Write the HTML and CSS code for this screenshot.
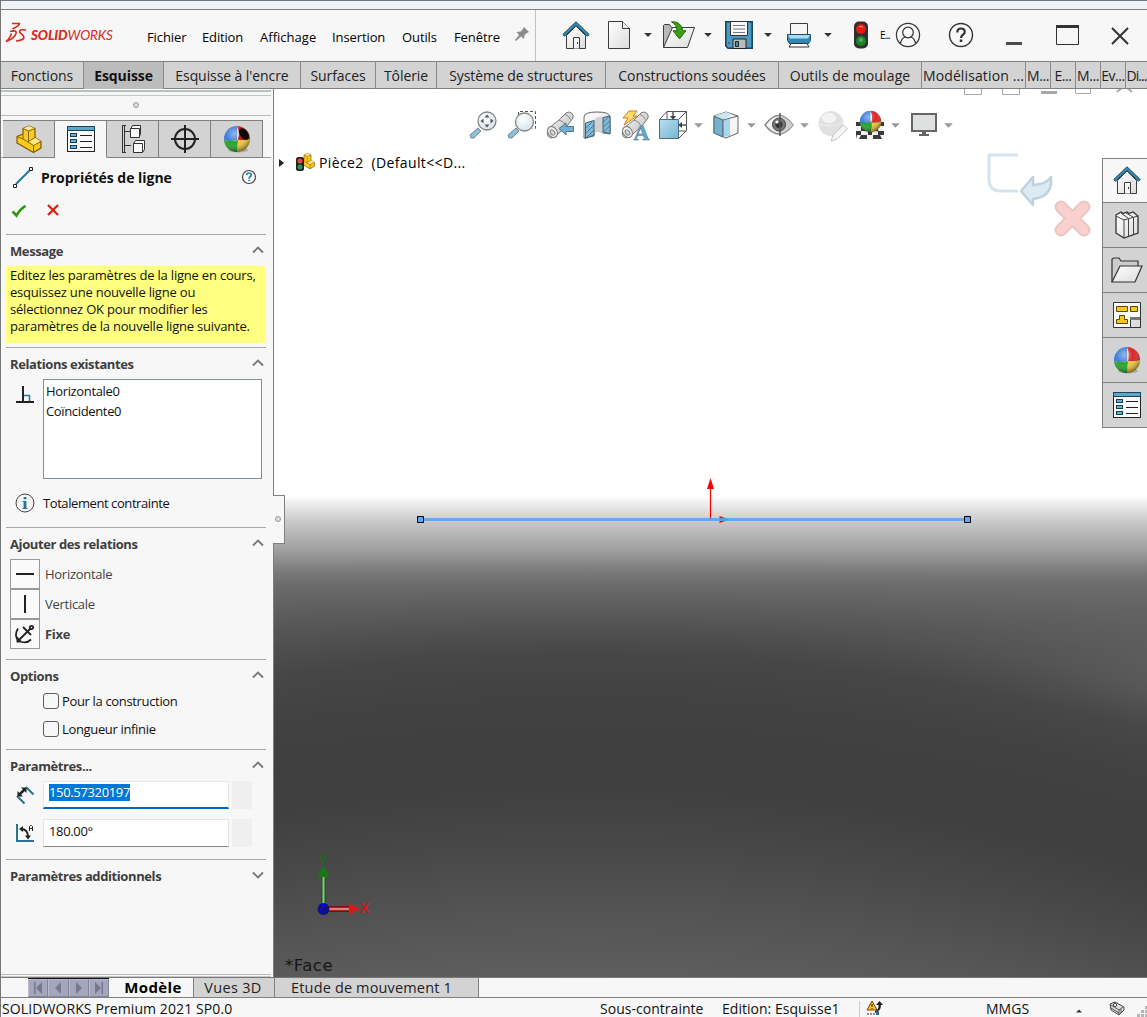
FILE: index.html
```html
<!DOCTYPE html>
<html lang="fr">
<head>
<meta charset="utf-8">
<title>SOLIDWORKS</title>
<link rel="stylesheet" href="styles.css">
</head>
<body>
<svg class="defs" width="0" height="0">
  <defs>
    <linearGradient id="gPaper" x1="0" y1="0" x2="1" y2="1"><stop offset="0" stop-color="#fff"/><stop offset="1" stop-color="#dcdcdc"/></linearGradient>
    <linearGradient id="gIce" x1="0" y1="0" x2="1" y2="1"><stop offset="0" stop-color="#b9def0"/><stop offset="1" stop-color="#78b4d2"/></linearGradient>
    <linearGradient id="gGrey" x1="0" y1="0" x2="1" y2="1"><stop offset="0" stop-color="#fff"/><stop offset="1" stop-color="#b4b4b4"/></linearGradient>
    <radialGradient id="gShade" cx=".4" cy=".3" r=".7"><stop offset="0" stop-color="#fff" stop-opacity=".45"/><stop offset=".5" stop-color="#fff" stop-opacity="0"/><stop offset="1" stop-color="#000" stop-opacity=".45"/></radialGradient>
    <radialGradient id="gLens" cx=".4" cy=".35" r=".7"><stop offset="0" stop-color="#fff"/><stop offset="1" stop-color="#d3e2e8"/></radialGradient>
    <symbol id="home" viewBox="0 0 28 28">
      <path d="M4.500 14.500 14 5l9.500 9.500V27.500h-19z" fill="url(#gPaper)" stroke="#3c3c3c"/>
      <path d="M11.500 27.500v-11h6v11" fill="#f4f4f4" stroke="#3c3c3c"/><path d="M15.500 21v2" stroke="#333"/>
      <path d="M.8 13.500 14 .8l13.200 12.700-1.700 1.700L14 4.600 2.500 15.200z" fill="#3589b2" stroke="#17455f"/>
    </symbol>
    <symbol id="sphere" viewBox="0 0 28 28">
      <ellipse cx="15" cy="25" rx="10" ry="2.500" fill="#000" opacity=".2"/>
      <path d="M14 14V1A13 13 0 0 0 1 15Q7 17 14 15z" fill="#3d7bd9"/>
      <path d="M14 1Q17 8 15 15q8 1 12-1A13 13 0 0 0 14 1z" fill="#d92626"/>
      <path d="M1 15q6 2 14 0-1 8-1 12A13 13 0 0 1 1 15z" fill="#26a526"/>
      <path d="M15 15q8 1 12-1a13 13 0 0 1-13 13q2-6 1-12z" fill="#eec73a"/>
      <circle cx="14" cy="14" r="13" fill="url(#gShade)"/>
    </symbol>
    <symbol id="plist" viewBox="0 0 28 26">
      <rect x=".5" y=".5" width="27" height="25" fill="#fafafa" stroke="#222"/>
      <rect x=".5" y=".5" width="27" height="4" fill="#5ea7c9" stroke="#17455f"/>
      <g fill="#63b0d4" stroke="#153f57"><rect x="3.500" y="7.500" width="6" height="3"/><rect x="3.500" y="13.500" width="6" height="3"/><rect x="3.500" y="19.500" width="6" height="3"/></g>
      <path d="M13 9.500h12M13 15.500h12M13 21.500h12" stroke="#222"/>
    </symbol>
    <symbol id="part" viewBox="0 0 26 28">
      <path d="M7 3.500 13 1l6 2.500v9l6 4v6.500l-7.500 4.500L1 18v-6.500L7 9z" fill="#fbcb22" stroke="#7c5800" stroke-width="1.200" stroke-linejoin="round"/>
      <path d="m7 3.500 5.500 2.500L19 3.500 13 1zM17.500 20.500l7.500-4-6-4-6 4z" fill="#ffe88c"/>
      <path d="m7 3.500 5.500 2.500L19 3.500M12.500 6v10.500l6.500-4M7 9v5l-6-2.500M7 14l10.500 6.500 7.500-4M17.500 20.500v7" fill="none" stroke="#8a6400"/>
    </symbol>
    <symbol id="scope" viewBox="0 0 28 28">
      <path d="M3 17 13 9l7-7q3-2 5.500 0t1.500 5l-6 8-9 8-4 3.500q-4 1.500-6-1.500t1-8z" fill="url(#gGrey)" stroke="#777"/>
      <ellipse cx="6.500" cy="21" rx="4.500" ry="5.800" transform="rotate(-35 6.500 21)" fill="#f2f2f2" stroke="#777"/>
      <ellipse cx="6.500" cy="21.500" rx="2" ry="3" transform="rotate(-35 6.500 21.500)" fill="#d5d5d5" stroke="#888"/><path d="m13 9q5 1 7 6M19 3.500q4 1 5.500 5" fill="none" stroke="#888"/>
    </symbol>
    <symbol id="caret" viewBox="0 0 8 8"><path d="M.2 2h7.600L4 6z" fill="currentColor"/></symbol>
    <symbol id="up" viewBox="0 0 12 8"><path d="M1 6.500 6 1.500l5 5" fill="none" stroke="#777" stroke-width="1.900"/></symbol>
  </defs>
</svg>

<div class="app">
  <div class="strip"></div>

  <header class="head">
    <div class="brand">
      <svg width="21" height="22" viewBox="0 0 21 22" fill="none" stroke="#da291c" stroke-width="1.600"><path d="M6 1.500h7.500q.5 1.500-7 5.500M4 9.500q7-2 6 2-1.500 5-10 8 3-2 5.500-8M20 8q-7-1-6.500 2l4 4q2 4-7.500 5"/></svg>
      <span class="brand-name"><b>SOLID</b>WORKS</span>
    </div>
    <nav class="menu">
      <span class="m1">Fichier</span><span class="m2">Edition</span><span class="m3">Affichage</span><span class="m4">Insertion</span><span class="m5">Outils</span><span class="m6">Fenêtre</span>
    </nav>
    <svg class="pin" width="14" height="14" viewBox="0 0 14 14"><path d="m9 0 5 5-2 1L9.500 8 9 12 6 9.500 1 14l-1-1 4-5L1.500 5l4.300-.5L8 2z" fill="#8c8c8c"/></svg>
    <div class="quick">
      <svg class="q-home" width="28" height="28"><use href="#home"/></svg>
      <svg class="q-new" width="24" height="28" viewBox="0 0 24 28"><path d="M1.500.5h14l7 7v20h-21z" fill="url(#gPaper)" stroke="#3c3c3c"/><path d="M15.500.5v7h7" fill="#eee" stroke="#3c3c3c"/></svg>
      <svg class="caret c1" width="8" height="8"><use href="#caret"/></svg>
      <svg class="q-open" width="34" height="28" viewBox="0 0 34 28"><path d="M1.500 26.500v-22l1-1h5l2 3h18v3" fill="#b9b9b9" stroke="#3c3c3c"/><path d="m1.500 26.500 9-20h22l-7 20z" fill="url(#gPaper)" stroke="#3c3c3c"/><path d="M9.500.8q9-1 11.500 9h3l-6.500 8-6.500-8h4Q15 4 9.500.8z" fill="#3aa012" stroke="#226b06"/></svg>
      <svg class="caret c2" width="8" height="8"><use href="#caret"/></svg>
      <svg class="q-save" width="28" height="28" viewBox="0 0 28 28"><path d="M.8.8h26.400v26.400H3L.8 25z" fill="#4d9bc1" stroke="#163f58" stroke-width="1.500"/><path d="M5.500.5h17v14h-17z" fill="#fafafa" stroke="#333"/><path d="M8 4.500h12M8 8h12M8 11.500h12" stroke="#777"/><path d="M8 18h13v9.500H8z" fill="#bbb" stroke="#222"/><path d="M10.500 20.500h3v5h-3z" fill="#4d8eb0" stroke="#222"/><path d="M3 22h2" stroke="#163f58"/></svg>
      <svg class="caret c3" width="8" height="8"><use href="#caret"/></svg>
      <svg class="q-print" width="26" height="26" viewBox="0 0 26 26"><path d="M4.500 1.500h17v13h-17z" fill="#f6f6f6" stroke="#3c3c3c"/><path d="M1.500 12.500h23v6l-2 3h-19l-2-3z" fill="#2f89b4" stroke="#164f6f"/><path d="M2 13h22l-2 3.500H4z" fill="#a9dcef"/><path d="M5 21.500h16l2 3.500H3z" fill="#fff" stroke="#333"/></svg>
      <svg class="caret c4" width="8" height="8"><use href="#caret"/></svg>
      <svg class="q-light" width="16" height="28" viewBox="0 0 16 28"><rect x="1" y=".5" width="14" height="27" rx="5" fill="#303030"/><circle cx="8" cy="8" r="5" fill="#e31b10"/><circle cx="8" cy="20" r="5" fill="#188526"/><path d="M6 6q2-1 4 0" stroke="#ff9d94" fill="none"/><circle cx="8" cy="19" r="2" fill="#62ac61"/></svg>
      <span class="q-more">E...</span>
      <svg class="q-user" width="26" height="26" viewBox="0 0 26 26" fill="none" stroke="#333" stroke-width="1.200"><circle cx="13" cy="13" r="11.600"/><circle cx="13" cy="10.500" r="5.300"/><path d="M5.500 21.500q1-6 5-6.500M20.500 21.500q-1-6-5-6.500"/></svg>
      <svg class="q-help" width="26" height="26" viewBox="0 0 26 26" fill="none" stroke="#333"><circle cx="13" cy="13" r="11.500" stroke-width="1.400"/><path d="M9.300 10.500q0-4 3.700-4t3.800 3.200q0 2-2.200 3.300-1.500 1-1.500 3" stroke-width="2.200"/><path d="M13 17.500v2.500" stroke-width="2.500"/></svg>
      <svg class="q-min" width="16" height="28" viewBox="0 0 16 28"><path d="M0 20h16v3H0z" fill="#4b4b4b"/></svg>
      <svg class="q-max" width="24" height="22" viewBox="0 0 24 22"><path d="M.5 1.500h22v18H.5z" fill="none" stroke="#333"/><path d="M0 0h23v3H0z" fill="#333"/></svg>
      <svg class="q-close" width="18" height="18" viewBox="0 0 18 18"><path d="m1 1 16 16M17 1 1 17" stroke="#333" stroke-width="2"/></svg>
    </div>
  </header>

  <nav class="ribbon">
    <span>Fonctions</span><span class="on">Esquisse</span><span>Esquisse à l'encre</span><span>Surfaces</span><span>Tôlerie</span><span>Système de structures</span><span>Constructions soudées</span><span class="wide">Outils de moulage</span><span class="wide">Modélisation ...</span><span class="tiny">M...</span><span class="tiny">E...</span><span class="tiny">M...</span><span class="tiny">Ev...</span><span class="tiny">Di...</span>
  </nav>

  <main class="main">
    <aside class="panel">
      <div class="grip"><i></i></div>
      <div class="ptabs">
        <span><svg width="26" height="28"><use href="#part"/></svg></span>
        <span class="on"><svg width="28" height="26"><use href="#plist"/></svg></span>
        <span><svg width="24" height="28" viewBox="0 0 24 28" fill="#fafafa" stroke="#333"><path d="M3.500 1v26M1 .5h4M1 27.500h4M1.500.5v27M4 6.500h5M4 20.500h6" fill="none"/><path d="M9.500 4.500l2-4h8v9l-2 3h-8zM12.500 18.500l2-3h9v9l-2 3h-9z"/><path d="M9.500 3.500h9v9h-9zM12.500 18.500h9v9h-9z"/></svg></span>
        <span><svg width="28" height="28" viewBox="0 0 28 28" fill="none" stroke="#222" stroke-width="2"><circle cx="14" cy="14" r="10"/><path d="M0 14h28M14 0v28"/></svg></span>
        <span><svg width="28" height="28" viewBox="0 0 28 28"><use href="#sphere"/><path d="M15 2q5 2 11 12-5 2-11 0 3-6 0-12z" fill="#c51d1d"/><ellipse cx="21" cy="9" rx="4" ry="6.500" transform="rotate(-35 21 9)" fill="#080808"/></svg></span>
      </div>
      <div class="ptitle">
        <svg width="21" height="21" viewBox="0 0 21 21"><path d="M3 17 17 3" stroke="#26739a" stroke-width="2"/><path d="M.5 17.500h3v3h-3zM16.500.5h3v3h-3z" fill="#fff" stroke="#222"/></svg>
        <b>Propriétés de ligne</b>
        <svg class="phelp" width="16" height="16" viewBox="0 0 16 16"><circle cx="8" cy="8" r="6.500" fill="#fff" stroke="#444" stroke-width="1.200"/><path d="M5.700 6.300q0-2.300 2.300-2.300t2.400 1.800q0 1-1.400 2-1 .7-1 2M8 10.700v1.500" stroke="#2a7faa" stroke-width="1.700" fill="none"/></svg>
      </div>
      <div class="confirm">
        <svg width="16" height="14" viewBox="0 0 16 14"><path d="m1.500 7.500 4 4Q9 5 14.500 1.800" fill="none" stroke="#2d9a0c" stroke-width="2.600"/></svg>
        <svg width="12" height="12" viewBox="0 0 12 12"><path d="m1 1 10 10M11 1 1 11" stroke="#d62410" stroke-width="2.300"/></svg>
      </div>

      <section class="sec s-msg">
        <h2>Message<svg width="12" height="8"><use href="#up"/></svg></h2>
        <p class="note">Editez les paramètres de la ligne en cours,<br>esquissez une nouvelle ligne ou<br>sélectionnez OK pour modifier les<br>paramètres de la nouvelle ligne suivante.</p>
      </section>
      <section class="sec s-rel">
        <h2>Relations existantes<svg width="12" height="8"><use href="#up"/></svg></h2>
        <div class="row">
          <svg class="perp" width="18" height="18" viewBox="0 0 18 18"><path d="M8 9.500h5.500V16" fill="none" stroke="#2b7fa8" stroke-width="1.600"/><path d="M7 0v16" stroke="#222" stroke-width="2"/><path d="M0 16h18" stroke="#222" stroke-width="2"/></svg>
          <div class="list"><span>Horizontale0</span><span>Coïncidente0</span></div>
        </div>
        <div class="row info">
          <svg width="20" height="20" viewBox="0 0 20 20"><circle cx="10" cy="10" r="9" fill="#f4f4f4" stroke="#444"/><path d="M10 8v7.500M10 4v2.300" stroke="#26739a" stroke-width="2.800"/><path d="M7.500 8.500H10M7.500 15.500h5" stroke="#26739a"/></svg>
          <span>Totalement contrainte</span>
        </div>
      </section>
      <section class="sec s-add">
        <h2>Ajouter des relations<svg width="12" height="8"><use href="#up"/></svg></h2>
        <div class="rel"><i><svg width="18" height="18" viewBox="0 0 18 18"><path d="M0 9h18" stroke="#222" stroke-width="2"/></svg></i><span>Horizontale</span></div>
        <div class="rel"><i><svg width="18" height="18" viewBox="0 0 18 18"><path d="M9 0v18" stroke="#222" stroke-width="2"/></svg></i><span>Verticale</span></div>
        <div class="rel"><i><svg width="20" height="20" viewBox="0 0 20 20" fill="none" stroke="#222" stroke-width="1.800"><path d="M3 17 15 5M8 3l8 8M3 4.500Q-1 11 3 16M7 18q5 1.500 9-2.500"/><circle cx="16.500" cy="3.500" r="1.700"/><path d="M1.500 12v6.500H8z" fill="#222" stroke="none"/></svg></i><b>Fixe</b></div>
      </section>
      <section class="sec s-opt">
        <h2>Options<svg width="12" height="8"><use href="#up"/></svg></h2>
        <div class="check"><i></i><span>Pour la construction</span></div>
        <div class="check"><i></i><span>Longueur infinie</span></div>
      </section>
      <section class="sec s-par">
        <h2>Paramètres...<svg width="12" height="8"><use href="#up"/></svg></h2>
        <div class="param focus">
          <svg width="18" height="18" viewBox="0 0 18 18"><path d="m1 10 7.500 7.500M10 1l7.500 7.500" stroke="#26739a" stroke-width="2"/><path d="M3 9 9 3" stroke="#222" stroke-width="2.500"/><path d="M1.500 5v5.500H7zM5 1.500h5.500V7z" fill="#222"/></svg>
          <span class="field"><em>150.57320197</em></span><i></i>
        </div>
        <div class="param">
          <svg width="18" height="18" viewBox="0 0 18 18"><path d="M1 0v17h17" fill="none" stroke="#26739a" stroke-width="2"/><path d="M5 5q7 0 7 8" fill="none" stroke="#222" stroke-width="1.800"/><path d="M3 5l4-3v6zM12 15.500 9 11.500h6z" fill="#222"/><path d="M13.500 7V2.500l1-1h1l1 1V7M13.500 4.500h3" fill="none" stroke="#222"/></svg>
          <span class="field">180.00°</span><i></i>
        </div>
      </section>
      <section class="sec s-more">
        <h2>Paramètres additionnels<svg class="down" width="12" height="8"><use href="#up"/></svg></h2>
      </section>
      <div class="pfoot"></div>
    </aside>

    <div class="view">
      <svg class="docbtns" width="172" height="7" viewBox="0 0 172 7" fill="none" stroke="#a8a8a8"><path d="M.5 0v5.500h17V0M38.500 0v5.500h17V0M111.500 0v4.500h15V0"/><path d="M77 3.500h16" stroke-width="3"/><path d="m153 3 4-3.500M168 3l-4-3.500" stroke-width="2"/></svg>
      <div class="hud">
        <svg viewBox="0 0 28 28"><path d="m0 24 8-7 3 3-7 7H1z" fill="#8ebed3" stroke="#6c8d9b"/><circle cx="17" cy="10" r="9" fill="url(#gLens)" stroke="#858585" stroke-width="1.300"/><path d="m17 3.500 2.500 3h-5zM17 16.500l2.500-3h-5zM10.500 10l3-2.500v5zM23.500 10l-3-2.500v5z" fill="#555"/></svg>
        <svg viewBox="0 0 28 28"><path d="M10.500 4V.5h17v17h-3" fill="none" stroke="#555" stroke-dasharray="3 2"/><path d="m0 24 8-7 3 3-7 7H1z" fill="#8ebed3" stroke="#6c8d9b"/><circle cx="16.500" cy="11" r="9" fill="url(#gLens)" stroke="#858585" stroke-width="1.300"/></svg>
        <svg viewBox="0 0 28 28"><use href="#scope"/><path d="m13 17.500 7-5.500v3.500h7.500v5H20v3.500z" fill="#72afd0" stroke="#417b98"/></svg>
        <svg viewBox="0 0 28 28"><path d="M1 6q0-5 13-5t13 5v17l-7-1q-6-4-9 0v3l-10 2z" fill="url(#gPaper)" stroke="#666"/><path d="M11 10q2-5 9-4v16q-5-3-9 1z" fill="#d2d2d2"/><path d="M2.500 12 11 9.500V24l-8.500 3.500zM20 6.500 27 5v17.500L20 21z" fill="#7fbbda" stroke="#3f6577"/><path d="m3 17 6-6M3 22l8-8M3 27l8-8M20.500 11l5-5M20.500 16l6-6M21 20.500l6-6" stroke="#356680" stroke-width=".8" fill="none"/></svg>
        <svg viewBox="0 0 28 28"><use href="#scope"/><path d="M8 0h8l-4 5h4L3 14l4-7H2z" fill="#ffdc6c" stroke="#cf7b20"/><text x="12.500" y="29" class="ann">A</text></svg>
        <svg viewBox="0 0 28 28" fill="none" stroke="#555"><path d="M.5 8.500 8 .5h19.500v19l-8 8M8 .5v8M27.500.5l-8 8M27.500 20H20"/><path d="M.5 8.500h19v19H.5z" fill="url(#gIce)" stroke="#466f84"/><path d="M14 0v6M28 14h-6" stroke-width="1.500"/><path d="m11 5 3 4 3-4zM23 11l-4 3 4 3z" fill="#444" stroke="none"/></svg>
        <svg class="caret" viewBox="0 0 8 8"><use href="#caret"/></svg>
        <svg viewBox="0 0 28 28"><path d="m2 5 12-4 12 4v17l-12 5-12-5z" fill="#f6f6f6" stroke="#666"/><path d="M2 5v17l9 4V9z" fill="#76b2d0" stroke="#496f83"/><path d="m2 5 12-4 6 2-9 6z" fill="#c7e6f3"/><path d="M11 9v17l7-1V8z" fill="#a9d6ea"/><path d="m2 5 9 4 15-4M11 9v17" stroke="#666" fill="none"/></svg>
        <svg class="caret" viewBox="0 0 8 8"><use href="#caret"/></svg>
        <svg viewBox="0 0 28 28"><path d="M0 14Q14-5 28 14 14 32 0 14z" fill="url(#gPaper)" stroke="#888" stroke-width="1.400"/><path d="M15 4.500q6 1 13 9.500-7 8-13 9z" fill="#ccc"/><circle cx="14" cy="13.500" r="6.500" fill="#777" stroke="#444"/><circle cx="14" cy="13.500" r="3.500" fill="#333"/><circle cx="12" cy="11" r="1.600" fill="#fff"/><path d="M15 2v23" stroke="#555" stroke-width="1.500"/></svg>
        <svg class="caret" viewBox="0 0 8 8"><use href="#caret"/></svg>
        <svg class="pale" viewBox="0 0 28 28"><circle cx="12" cy="12.500" r="12.500" fill="#dedede"/><ellipse cx="10" cy="7" rx="7" ry="5" fill="#f3f3f3"/><path d="M0 13q12 4 24-1" stroke="#ececec" fill="none"/><path d="m12 30 2-6 10.500-10 4 4-10.500 10z" fill="#f5f5f5" stroke="#bdbdbd"/></svg>
        <svg viewBox="0 0 28 28"><path d="M0 11h28v17H0z" fill="#3b3b3b"/><path d="M0 15h5v5H0zM22 15h6v5h-6zM5 20h7v4H5zM16 20h6v4h-6zM11 24h6v4h-6zM1 24h4l-2 4H0zM24 24h4v4h-2z" fill="#f4f4f4"/><use href="#sphere" x="3" y="-1" width="23" height="23"/></svg>
        <svg class="caret" viewBox="0 0 8 8"><use href="#caret"/></svg>
        <svg viewBox="0 0 28 28"><path d="M2 3h24v17H2z" fill="#dfe1e1" stroke="#666" stroke-width="2"/><path d="M12 21h4v2h3v2H9v-2h3z" fill="#666"/></svg>
        <svg class="caret" viewBox="0 0 8 8"><use href="#caret"/></svg>
      </div>
      <div class="tree">
        <svg width="6" height="8" viewBox="0 0 6 8"><path d="M0 0v8l5-4z" fill="#222"/></svg>
        <svg class="treepart" width="20" height="20" viewBox="0 0 20 20"><use href="#part" x="4" y="0" width="15" height="18"/><rect x="0" y="5" width="8" height="14" rx="2.500" fill="#222"/><circle cx="4" cy="9" r="2.500" fill="#e44"/><circle cx="4" cy="15" r="2.500" fill="#295"/></svg>
        <span>Pièce2&nbsp; (Default&lt;&lt;D...</span>
      </div>
      <svg class="corner" width="106" height="86" viewBox="0 0 106 86"><path d="M33 2H4v24q0 12 12 12h17" fill="none" stroke="#d4e4ed" stroke-width="3"/><path d="M36 38 48 24v8q14-1 18-8 2 20-18 22v6z" fill="#dcebf2" stroke="#bdd2de" stroke-width="2.500" stroke-linejoin="round"/><path d="m76 54 23 23M99 54 76 77" stroke="#eec4c2" stroke-width="13" stroke-linecap="round"/><path d="m76 54 23 23M99 54 76 77" stroke="#f8d0ce" stroke-width="9" stroke-linecap="round"/></svg>

      <svg class="sketch" width="560" height="50" viewBox="0 0 560 50"><path d="M294.500 45V14" stroke="#f00" stroke-width="1.200"/><path d="m294.500 3 3.500 11h-7zM303.500 41v7l10-3.500z" fill="#f00"/><path d="M4 44.500h547" stroke="#5ba4f5" stroke-width="3" opacity=".9"/><g fill="#5aa8f5" stroke="#000"><path d="M1.500 41.500h6v6h-6zM548.500 41.500h6v6h-6z"/></g></svg>
      <svg class="triad" width="70" height="70" viewBox="0 0 70 70"><path d="M20.500 18v30" stroke="#176117" stroke-width="5"/><path d="M20.500 18v30" stroke="#8fc08f" stroke-width="2"/><path d="m20.500 10 6 12h-12z" fill="#167916"/><path d="M24 54h25" stroke="#7e1010" stroke-width="6"/><path d="M24 54h25" stroke="#ef7777" stroke-width="2.500"/><path d="m58 54-12-6v12z" fill="#cf1c1c"/><circle cx="20.500" cy="54" r="6" fill="#141478"/><text x="16" y="59" class="ax z">Z</text><text x="16.500" y="10" class="ax y">Y</text><text x="58" y="58" class="ax x">X</text></svg>
      <span class="face">*Face</span>
      <nav class="task">
        <span class="on"><svg width="28" height="28"><use href="#home"/></svg></span>
        <span><svg width="24" height="28" viewBox="0 0 24 28"><path d="m1 4 5-3 2 1.500L12 1l2 1.500L18 1l5 4v17L9 27l-8-5z" fill="url(#gPaper)" stroke="#333" stroke-width="1.300"/><path d="m1 5 8 4 14-4M9 9v18M13.500 8v17.500M18.500 6.500v17M6 2l7 5M11 2l7 4" stroke="#444" fill="none"/></svg></span>
        <span><svg width="32" height="26" viewBox="0 0 32 26"><path d="M1 25V2l2-1h5l2 3h17v5" fill="#ccc" stroke="#333" stroke-width="1.200"/><path d="m1 25 8-16h22l-7 16z" fill="url(#gPaper)" stroke="#333" stroke-width="1.200"/></svg></span>
        <span><svg width="28" height="26" viewBox="0 0 28 26"><path d="M.5.5h27v25H.5z" fill="#fafafa" stroke="#333"/><g fill="#f8c91c" stroke="#5b4500"><path d="M3.500 4.500h11v5h-11zM17.500 4.500h7v5h-7zM6.500 13.500h5v4h3v4h-11v-4h3z"/></g><path d="M17.500 15.500h10v10h-10z" fill="#ddd" stroke="#333"/><path d="M17 15h10v3H17z" fill="#777"/></svg></span>
        <span><svg width="28" height="28"><use href="#sphere"/></svg></span>
        <span><svg width="28" height="26"><use href="#plist"/></svg></span>
      </nav>
    </div>
    <div class="splitter"><i></i></div>
  </main>

  <div class="sheets">
    <div class="nav">
      <i><svg width="12" height="12" viewBox="0 0 12 12"><path d="M10 0v12L4 6zM2 0h1.500v12H2z"/></svg></i>
      <i><svg width="12" height="12" viewBox="0 0 12 12"><path d="M9 0v12L3 6z"/></svg></i>
      <i><svg width="12" height="12" viewBox="0 0 12 12"><path d="M3 0v12l6-6z"/></svg></i>
      <i><svg width="12" height="12" viewBox="0 0 12 12"><path d="M2 0v12l6-6zM8.500 0H10v12H8.500z"/></svg></i>
    </div>
    <b class="sh1">Modèle</b><span class="sh2">Vues 3D</span><span class="sh3">Etude de mouvement 1</span>
  </div>

  <footer class="status">
    <span class="st1">SOLIDWORKS Premium 2021 SP0.0</span>
    <span class="st2">Sous-contrainte</span>
    <span class="st3">Edition: Esquisse1</span>
    <svg class="st4" width="16" height="14" viewBox="0 0 16 14"><path d="m5 0 5 9H0z" fill="#ffc21c" stroke="#7b4300"/><path d="M5 3v3M5 7v1" stroke="#111"/><path d="M8 10q4-1 3.500-6H9l3.500-4L16 4h-2q0 6-6 8z" fill="#222"/><path d="M0 13h8" stroke="#333" stroke-dasharray="2 1"/><path d="M9 10.500h3V14H9z" fill="#276b91"/></svg>
    <span class="st5">MMGS</span>
    <svg class="st6" width="6" height="4" viewBox="0 0 6 4"><path d="M0 3.500h6L3 .5z" fill="#333"/></svg>
    <svg class="st7" width="16" height="14" viewBox="0 0 16 14"><path d="m1 2 5-2 9 5v3l-5 5-8-5z" fill="#ddd" stroke="#444"/><path d="m2 3 8 5 4-3M10 8v5M2 6l8 5M12 7v4" fill="none" stroke="#555"/><circle cx="6" cy="3" r="1.600" fill="#fff" stroke="#444"/></svg>
    <svg class="st8" width="10" height="12" viewBox="0 0 10 12" fill="#b5b5b5"><path d="M8 0h2v3H8zM4 4h3v3H4zM8 4h2v3H8zM0 8h3v3H0zM4 8h3v3H4zM8 8h2v3H8z"/></svg>
  </footer>
</div>
</body>
</html>
```
FILE: styles.css
```css
* { box-sizing: border-box; }
body { margin: 0; width: 1147px; height: 1017px; overflow: hidden; font: 13px/17px "Open Sans", "Noto Sans", sans-serif; color: #000; background: #f7f7f7; }
svg { display: block; flex: none; overflow: visible; }
.defs { position: absolute; }
i { font-style: normal; }
.app { height: 1017px; display: flex; flex-direction: column; border-left: 1px solid #777; white-space: nowrap; }
.strip { height: 10px; flex: none; background: #eff4fb; border-top: 1px solid #777; border-bottom: 1px solid #808080; }

.head { height: 51px; flex: none; display: flex; align-items: center; background: #f7f7f7; }
.brand { width: 146px; padding: 0 0 6px 5px; display: flex; align-items: center; gap: 4px; color: #da291c; }
.brand-name { font: italic 13.5px/18px Lato, sans-serif; letter-spacing: -.15px; padding-top: 4px; }
.brand-name b { font-weight: 900; }
.menu { display: flex; gap: 16px; padding-top: 4px; letter-spacing: -.1px; }
.m1 { width: 39px; } .m2 { width: 42px; letter-spacing: -.15px; } .m3 { width: 56px; letter-spacing: .02px; } .m4 { width: 54px; } .m5 { width: 36px; } .m6 { width: 46px; }
.pin { margin: 0 0 4px 15px; }
.quick { margin-left: 6px; height: 51px; flex: 1; display: flex; align-items: center; border-left: 1px solid #c0c0c0; color: #333; }
.q-home { margin-left: 26px; } .q-new { margin-left: 17px; }
.c1 { margin-left: 13px; } .c2 { margin-left: 8px; } .c3 { margin-left: 11px; } .c4 { margin-left: 12px; }
.q-home, .q-new, .q-open, .q-save, .q-print, .q-light, .q-user, .q-help, .quick .caret { margin-bottom: 1px; }
.q-open { margin-left: 10px; } .q-save { margin-left: 13px; } .q-print { margin-left: 14px; } .q-light { margin-left: 21px; }
.q-more { margin-left: 11px; width: 11px; font-size: 10px; letter-spacing: -.9px; color: #000; }
.q-user { margin-left: 4px; } .q-help { margin-left: 27px; } .q-min { margin-left: 32px; } .q-max { margin-left: 34px; } .q-close { margin-left: 31px; }

.ribbon { height: 28px; flex: none; display: grid; grid-template-columns: 83px 80px 137px 75px 61px 169px 173px 143px 104px 25px 25px 25px 25px 21px; border-top: 1px solid #808080; border-bottom: 1px solid #808080; background: #d3d3d3; font-size: 14px; line-height: 27px; text-align: center; color: #222; letter-spacing: -.08px; }
.ribbon span { border-right: 1px solid #8a8a8a; }
.ribbon .wide { letter-spacing: .12px; }
.ribbon .tiny { letter-spacing: -.45px; }
.ribbon span:last-child { border: 0; letter-spacing: -.9px; }
.ribbon .on { background: #bcbcbc; font-weight: 700; color: #111; }

.main { flex: none; height: 888px; display: flex; position: relative; }
.panel { width: 273px; flex: none; border-right: 1px solid #808080; display: flex; flex-direction: column; color: #111; letter-spacing: -.28px; }
.grip { margin-right: 2px; height: 27px; border-bottom: 1px solid #b8b8b8; border-top: 1px solid #fff; box-shadow: inset 0 2px #b7c0c3, inset 0 5px #f7f7f7, inset 0 6px #c4c4c4; display: flex; justify-content: center; padding-top: 12px; }
.grip i, .splitter i { width: 6px; height: 6px; border: 1px solid #999; border-radius: 50%; background: #ddd; }
.ptabs { margin: 4px 2px 0 0; padding-left: 2px; height: 38px; display: flex; border-bottom: 1px solid #a0a0a0; }
.ptabs span { width: 52px; height: 38px; display: flex; justify-content: center; align-items: center; background: #d3d3d3; border: 1px solid #808080; border-left: 0; }
.ptabs .on { background: #f7f7f7; border-bottom-color: #f7f7f7; }
.ptitle { height: 40px; padding: 0 16px 2px 12px; display: flex; align-items: center; gap: 7px; font-size: 14px; letter-spacing: -.02px; }
.phelp { margin-left: auto; }
.confirm { height: 36px; padding: 6px 0 0 10px; display: flex; gap: 20px; }
.sec { margin: 0 7px 0 5px; border-top: 1px solid #a8a8a8; }
.sec h2 { margin: 0; height: 31px; padding: 2px 2px 0 4px; display: flex; align-items: center; justify-content: space-between; font-size: 13px; letter-spacing: -.4px; color: #3e3e3e; }
.sec h2 svg { margin-bottom: 3px; }
.down { transform: scaleY(-1); }
.s-msg { height: 113px; }
.note { margin: 0; height: 77px; padding: 1px 4px; background: #ffff80; letter-spacing: -.2px; }
.s-rel { height: 180px; }
.row { display: flex; padding-left: 9px; }
.perp { margin-top: 7px; margin-left: 1px; }
.list { margin-left: 9px; width: 219px; height: 100px; background: #fff; border: 1px solid #828ca5; padding: 1px 2px; display: flex; flex-direction: column; line-height: 20px; letter-spacing: -.35px; }
.info { margin-top: 14px; align-items: center; gap: 8px; letter-spacing: -.42px; }
.s-add { height: 132px; }
.rel { display: flex; align-items: center; gap: 5px; padding-left: 4px; height: 30px; color: #444; }
.rel i { width: 30px; height: 30px; border: 1px solid #999; display: flex; align-items: center; justify-content: center; background: #fafafa; }
.s-opt { height: 90px; }
.check { height: 28px; padding: 0 0 10px 37px; display: flex; align-items: center; gap: 3px; letter-spacing: -.34px; }
.check i { width: 16px; height: 16px; border: 1px solid #5e5e5e; border-radius: 3px; }
.s-opt h2 { height: 32px; padding-bottom: 1px; }
.s-par { height: 110px; }
.param { display: flex; align-items: center; padding-left: 10px; height: 28px; margin-bottom: 10px; }
.field { margin: 0 3px 0 9px; width: 186px; height: 28px; padding: 3px 5px; background: #fff; border: 1px solid #e5e5e5; border-bottom-color: #858585; letter-spacing: -.35px; }
.param i { width: 20px; height: 28px; background: #efefef; }
.focus .field { padding-top: 2px; border-bottom: 2px solid #0067c0; }
.field em { display: inline-block; font-style: normal; color: #fff; background: #0078d7; }
.pfoot { margin: auto 2px 0 0; height: 3px; border-top: 1px solid #b8b8b8; border-bottom: 1px solid #c8c8c8; }
.splitter { position: absolute; left: 272px; top: 406px; width: 12px; height: 49px; display: flex; align-items: center; justify-content: center; padding: 0 2px 2px 0; background: #f7f7f7; border: 1px solid #808080; border-left: 0; }

.view { position: relative; flex: 1; overflow: hidden; background: radial-gradient(circle at 310px 2658px, #5e5e5e 1770px, #545454 1834px, #484848 1900px, #404040 1957px, #3f3f3f 2000px, #424242 2054px, #474747 2094px, #505050 2117px, #585858 2134px, #646464 2167px, #6c6c6c 2200px); }
.view::before { content: ""; position: absolute; inset: 0; background: linear-gradient(#fff 407px, #f1f1f1 413px, #c8c8c8 433px, #9f9f9f 461px, #808080 480px, #6e6e6e 495px, #5b5b5b 524px, #505050 545px, #484848 565px, #424242 604px); -webkit-mask-image: linear-gradient(#000 470px, transparent 600px); mask-image: linear-gradient(#000 470px, transparent 600px); }
.docbtns { position: absolute; left: 690px; top: 0; }
.hud { position: absolute; left: 196px; top: 22px; display: flex; align-items: center; color: #999; }
.hud svg { width: 28px; height: 28px; margin-right: 9.8px; }
.hud .caret { width: 9px; height: 9px; margin: 0 9.4px 0 -3px; }
.pale { opacity: .9; }
.ann { font: bold 22px "Liberation Serif", serif; fill: #67a9cb; stroke: #41728a; stroke-width: .5px; }
.tree { position: absolute; left: 5px; top: 62px; display: flex; align-items: center; font-size: 14px; line-height: 24px; letter-spacing: .36px; }
.treepart { margin: 0 3px 2px 11px; }
.corner { position: absolute; left: 711px; top: 64px; }
.sketch { position: absolute; left: 142px; top: 386px; }
.triad { position: absolute; left: 29px; top: 766px; }
.ax { font: 14px "Open Sans", sans-serif; }
.x { fill: #f00; } .y { fill: #0a750a; } .z { fill: #00f; }
.face { position: absolute; left: 11px; top: 866px; font: 16.5px/22px "DejaVu Sans", sans-serif; letter-spacing: .5px; color: #151515; }
.task { position: absolute; right: 0; top: 69px; width: 45px; border-left: 1px solid #808080; border-top: 1px solid #808080; }
.task span { height: 45px; display: flex; justify-content: center; align-items: center; background: #d3d3d3; border-bottom: 1px solid #808080; padding-left: 4px; }
.task .on { height: 44px; background: #f7f7f7; padding-bottom: 1px; }

.sheets { height: 21px; flex: none; display: flex; border-top: 1px solid #777; border-bottom: 1px solid #808080; font-size: 14.500px; line-height: 20px; text-align: center; }
.nav { margin-left: 27px; width: 81px; display: flex; background: #a5a6bb; border-top: 1px solid #111; }
.nav i { flex: 1; display: flex; align-items: center; justify-content: center; border: 1px solid; border-color: #b9bacd #83849a #83849a #b9bacd; }
.nav svg { fill: #77788f; }
.sh1 { width: 84px; padding-left: 4px; font-size: 15px; line-height: 19px; letter-spacing: .35px; }
.sh2, .sh3 { background: #d3d3d3; border-left: 1px solid #808080; color: #222; }
.sh2 { width: 81px; padding-right: 2px; letter-spacing: .3px; }
.sh3 { width: 205px; border-right: 1px solid #808080; padding-right: 10px; letter-spacing: .15px; }
.status { height: 19px; flex: none; display: flex; padding-top: 3px; font-size: 14px; line-height: 16px; color: #111; letter-spacing: .03px; }
.st1 { width: 599px; padding-left: 1px; letter-spacing: .1px; }
.st2 { width: 122px; }
.st3 { width: 138px; border-right: 1px solid #ccc; }
.st4 { margin: 0 0 0 7px; }
.st5 { width: 90px; margin-left: 103px; }
.st6 { margin-top: 8px; }
.st7 { margin: 1px 0 0 27px; }
.st8 { margin: 5px 0 0 auto; }
```
